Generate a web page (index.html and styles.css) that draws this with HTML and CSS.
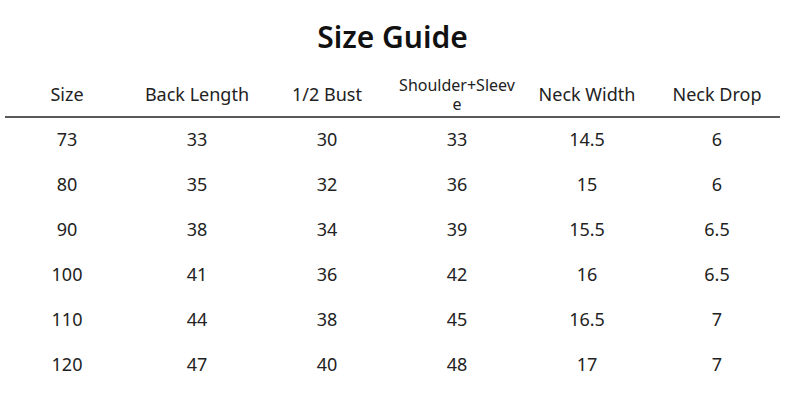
FILE: index.html
```html
<!DOCTYPE html>
<html>
<head>
<meta charset="utf-8">
<link rel="stylesheet" href="styles.css">
</head>
<body>
<div class="page">
  <h1 class="title">Size Guide</h1>
  <div class="head">
    <div class="cell">Size</div>
    <div class="cell">Back Length</div>
    <div class="cell">1/2 Bust</div>
    <div class="cell small"><span>Shoulder+Sleeve</span></div>
    <div class="cell">Neck Width</div>
    <div class="cell">Neck Drop</div>
  </div>
  <div class="rule"></div>
  <div class="rows">
    <div class="row"><div class="cell">73</div><div class="cell">33</div><div class="cell">30</div><div class="cell">33</div><div class="cell">14.5</div><div class="cell">6</div></div>
    <div class="row"><div class="cell">80</div><div class="cell">35</div><div class="cell">32</div><div class="cell">36</div><div class="cell">15</div><div class="cell">6</div></div>
    <div class="row"><div class="cell">90</div><div class="cell">38</div><div class="cell">34</div><div class="cell">39</div><div class="cell">15.5</div><div class="cell">6.5</div></div>
    <div class="row"><div class="cell">100</div><div class="cell">41</div><div class="cell">36</div><div class="cell">42</div><div class="cell">16</div><div class="cell">6.5</div></div>
    <div class="row"><div class="cell">110</div><div class="cell">44</div><div class="cell">38</div><div class="cell">45</div><div class="cell">16.5</div><div class="cell">7</div></div>
    <div class="row"><div class="cell">120</div><div class="cell">47</div><div class="cell">40</div><div class="cell">48</div><div class="cell">17</div><div class="cell">7</div></div>
  </div>
</div>
</body>
</html>
```
FILE: styles.css
```css
html, body {
  margin: 0;
  padding: 0;
  background: #fff;
}
body {
  font-family: "Noto Sans", "Open Sans", sans-serif;
  color: #222;
}
.page {
  width: 785px;
  height: 400px;
  overflow: hidden;
}
.title {
  margin: 0;
  padding-top: 18px;
  height: 53px;
  box-sizing: border-box;
  text-align: center;
  font-size: 30px;
  line-height: 38px;
  font-weight: 600;
  color: #111;
}
.head, .row {
  display: grid;
  grid-template-columns: repeat(6, 130px);
  margin-left: 2px;
}
.head {
  height: 63px;
}
.head .cell {
  font-size: 18px;
  line-height: 22px;
  text-align: center;
  padding-top: 30px;
}
.head .cell.small {
  font-size: 16px;
  line-height: 19px;
  padding-top: 23px;
}
.head .cell.small span {
  display: block;
  width: 120px;
  margin: 0 auto;
  word-break: break-all;
}
.rule {
  height: 2px;
  margin: 0 5px;
  background: #5a5a5a;
}
.rows {
  margin-top: -2px;
}
.row {
  height: 45px;
  align-items: center;
}
.row .cell {
  text-align: center;
  font-size: 18px;
  line-height: 22px;
}
```
